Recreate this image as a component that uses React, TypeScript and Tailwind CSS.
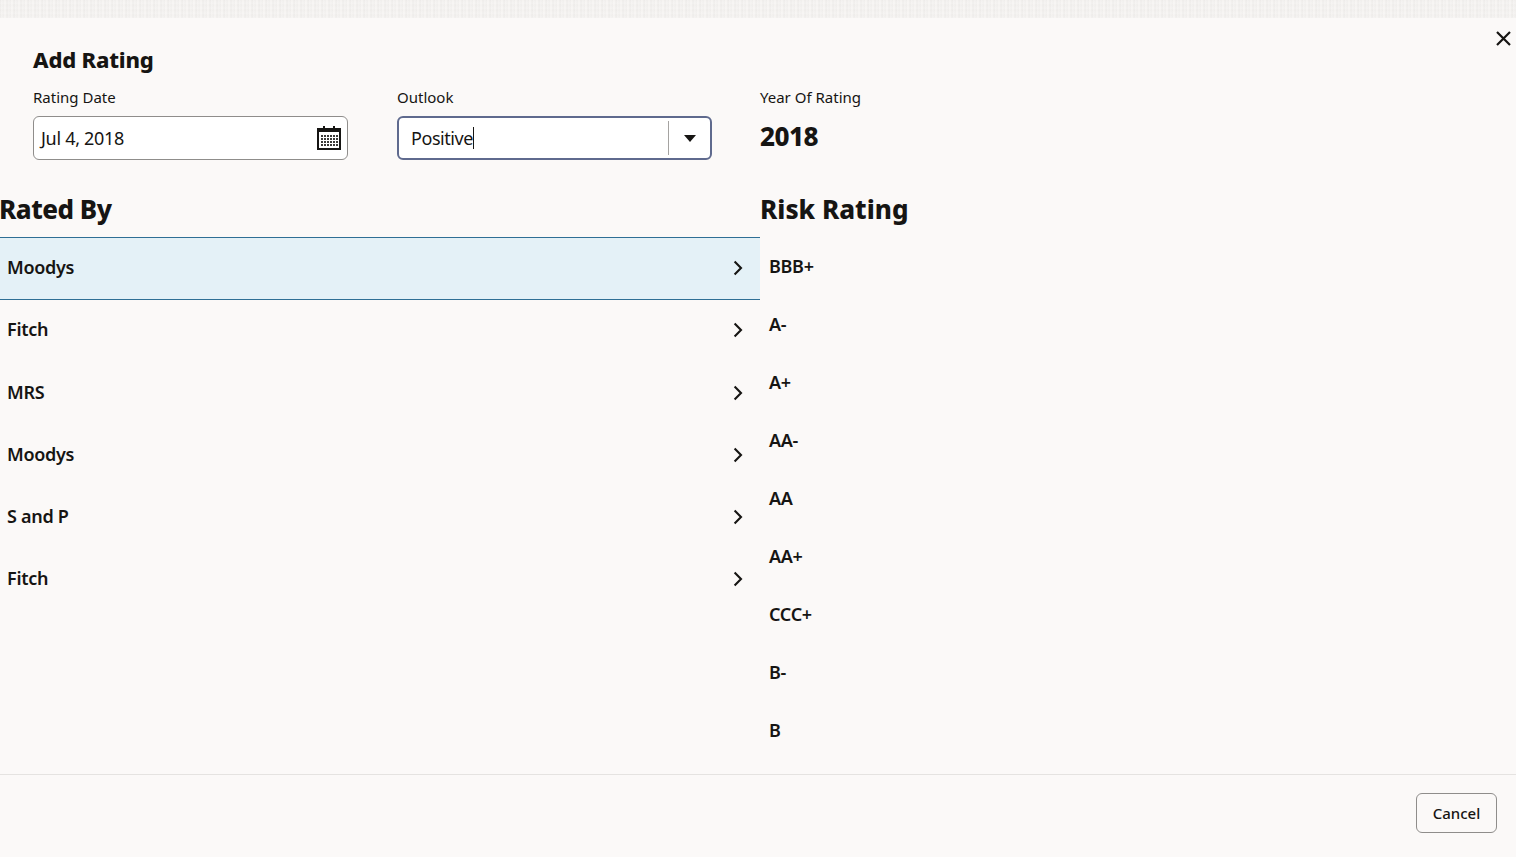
const raters = ["Moodys", "Fitch", "MRS", "Moodys", "S and P", "Fitch"];
const ratings = ["BBB+", "A-", "A+", "AA-", "AA", "AA+", "CCC+", "B-", "B"];

function Chevron() {
  return (
    <svg width="10" height="16" viewBox="0 0 10 16" fill="none" className="shrink-0 mt-[1px]">
      <path d="M1.6 1.6 8 8l-6.4 6.4" stroke="#161513" strokeWidth="2.1" />
    </svg>
  );
}

function CalendarIcon() {
  return (
    <svg width="24" height="24" viewBox="0 0 24 24" fill="none">
      <rect x="1" y="3" width="22" height="20" fill="#fff" stroke="#161513" strokeWidth="2" />
      <rect x="1" y="3" width="22" height="3" fill="#161513" />
      <rect x="6" y="0" width="2" height="6" fill="#161513" />
      <rect x="16" y="0" width="2" height="6" fill="#161513" />
      {[9, 12, 15, 18].map((y) =>
        [4, 7, 10, 13, 16, 19].map((x) => (
          <rect key={`${x}-${y}`} x={x} y={y} width="2" height="2" fill="#3b3a38" />
        ))
      )}
    </svg>
  );
}

export default function App() {
  return (
    <div className="h-[857px] w-[1516px] overflow-hidden flex flex-col bg-[#fbf9f8] text-[#161513] font-['Noto_Sans',sans-serif]">
      {/* textured strip behind the dialog */}
      <div className="h-[18px] shrink-0 bg-[#f1efed] bg-[repeating-linear-gradient(0deg,#ffffff33_0px,#ffffff00_3px,#ffffff44_5px),repeating-linear-gradient(90deg,#ebe9e7_0px,#f6f4f2_2px,#edebe9_3px,#f8f6f4_5px,#ecEAe8_7px)]" />

      <div className="relative flex-1 flex flex-col min-h-0">
        <button className="absolute top-[12px] right-[4px] w-[17px] h-[17px]">
          <svg width="17" height="17" viewBox="0 0 17 17" fill="none">
            <path d="M2 2l13 13M15 2 2 15" stroke="#161513" strokeWidth="2.2" />
          </svg>
        </button>

        <div className="pl-[33px] pt-[26px]">
          <h1 className="text-[22px] leading-[30px] font-extrabold tracking-[-0.2px]">Add Rating</h1>
          <div className="flex mt-[13px]">
            <div className="w-[364px]">
              <label className="block text-[15px] leading-[20px] mb-[9px]">Rating Date</label>
              <div className="w-[315px] h-[44px] flex items-center justify-between pl-[7px] pr-[6px] bg-white border border-[#8f8d8b] rounded-[6px]">
                <span className="text-[18px] tracking-[-0.3px]">Jul 4, 2018</span>
                <CalendarIcon />
              </div>
            </div>
            <div className="w-[363px]">
              <label className="block text-[15px] leading-[20px] mb-[9px]">Outlook</label>
              <div className="w-[315px] h-[44px] flex items-center bg-white border-2 border-[#5f6a8e] rounded-[6px]">
                <span className="flex-1 pl-[12px] text-[18px] tracking-[-0.45px] flex items-center">
                  Positive
                  <span className="w-px h-[22px] bg-[#161513]" />
                </span>
                <span className="w-px h-[34px] bg-[#a5a3a1]" />
                <span className="w-[41px] flex justify-center">
                  <svg width="12" height="7" viewBox="0 0 12 7">
                    <path d="M0 0h12L6 7z" fill="#161513" />
                  </svg>
                </span>
              </div>
            </div>
            <div>
              <label className="block text-[15px] leading-[20px] mb-[9px]">Year Of Rating</label>
              <div className="text-[26px] leading-[40px] font-extrabold tracking-[-0.5px]">2018</div>
            </div>
          </div>
        </div>

        <div className="flex flex-1 min-h-0 mt-[29px]">
          <div className="w-[760px] shrink-0">
            <h2 className="text-[26px] leading-[40px] font-extrabold mb-[8px] tracking-[-0.5px] -ml-px">Rated By</h2>
            {raters.map((name, i) => (
              <div
                key={i}
                className={
                  i === 0
                    ? "h-[63px] pb-[3px] flex items-center justify-between pl-[7px] pr-[17px] bg-[#e4f1f7] border-y border-[#2f6f95]"
                    : i === 1
                      ? "h-[63px] pb-[5px] flex items-center justify-between pl-[7px] pr-[17px]"
                      : "h-[62px] pb-[3px] flex items-center justify-between pl-[7px] pr-[17px]"
                }
              >
                <span className="text-[18px] font-semibold tracking-[-0.3px]">{name}</span>
                <Chevron />
              </div>
            ))}
          </div>
          <div>
            <h2 className="text-[26px] leading-[40px] font-extrabold mb-[8px]">Risk Rating</h2>
            {ratings.map((r) => (
              <div key={r} className="h-[58px] pl-[9px] pt-[17px] text-[18px] leading-[24px] font-semibold tracking-[-0.3px]">
                {r}
              </div>
            ))}
          </div>
        </div>

        <div className="h-[83px] shrink-0 border-t border-[#e5e3e1] flex items-center justify-end pr-[19px] pb-[6px]">
          <button className="w-[81px] h-[40px] border border-[#8f8d8b] rounded-[6px] text-[15px] font-medium">
            Cancel
          </button>
        </div>
      </div>
    </div>
  );
}
